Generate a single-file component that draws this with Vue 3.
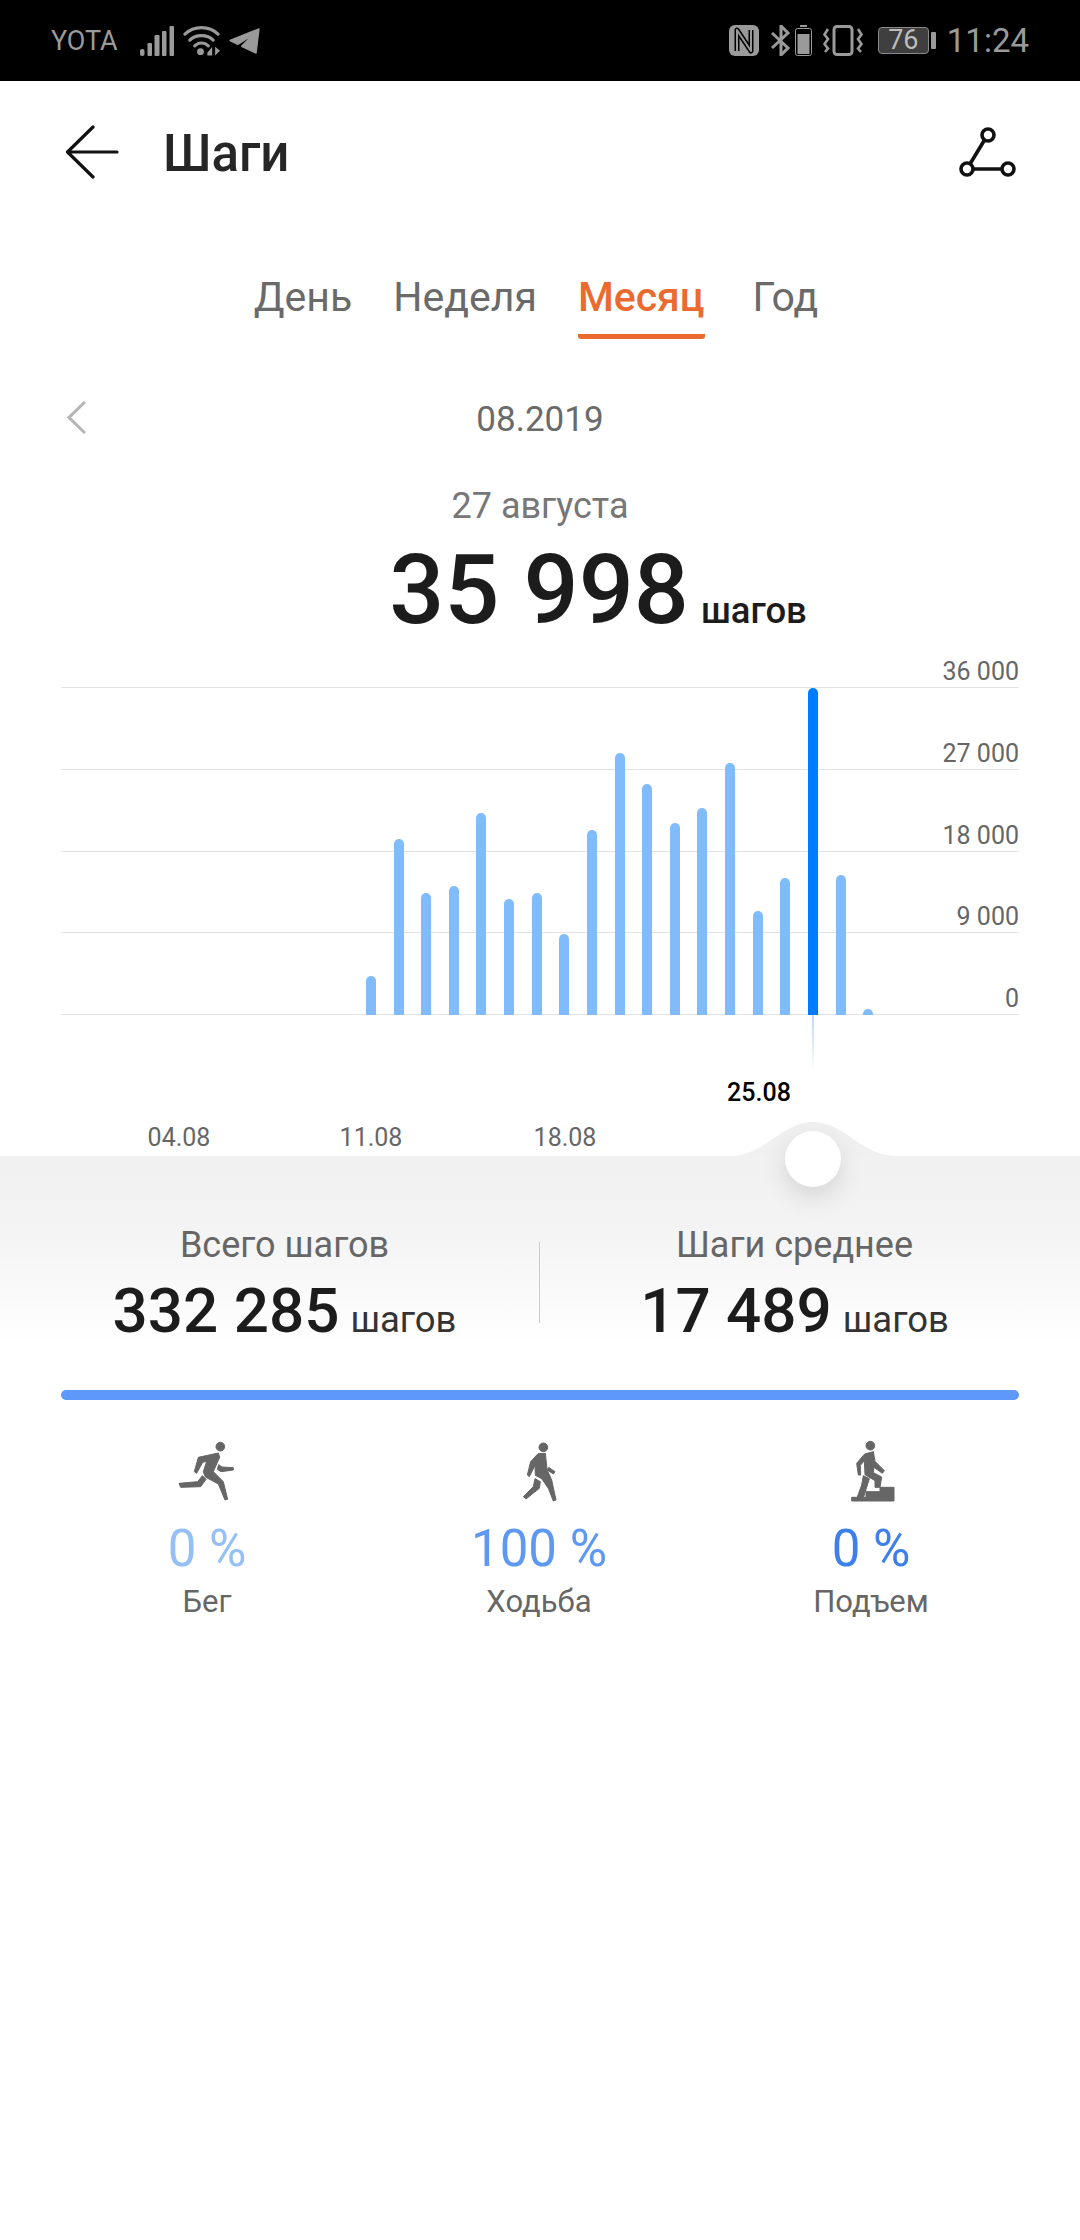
<script setup>
const bars = [
  { x: 371, top: 976 }, { x: 399, top: 839 }, { x: 426, top: 893 }, { x: 454, top: 886 },
  { x: 481, top: 813 }, { x: 509, top: 899 }, { x: 537, top: 893 }, { x: 564, top: 934 },
  { x: 592, top: 830 }, { x: 620, top: 753 }, { x: 647, top: 784 }, { x: 675, top: 823 },
  { x: 702, top: 808 }, { x: 730, top: 763 }, { x: 758, top: 911 }, { x: 785, top: 878 },
  { x: 813, top: 688, active: true }, { x: 841, top: 875 }, { x: 868, top: 1009 }
].map(b => ({ left: b.x - 5 - 61, height: 1015 - b.top, active: b.active }))
const axis = ['36 000', '27 000', '18 000', '9 000', '0']
const activities = [
  { name: 'Бег', pct: '0 %', cls: 'c1', icon: 'run' },
  { name: 'Ходьба', pct: '100 %', cls: 'c2', icon: 'walk' },
  { name: 'Подъем', pct: '0 %', cls: 'c3', icon: 'climb' }
]
</script>

<template>
  <div class="page">
    <div class="status">
      <div class="st-left">
        <span class="carrier">YOTA</span>
        <svg width="34" height="30" viewBox="0 0 34 30" class="sig"><g fill="#9a9a9a"><rect x="0" y="23" width="4.500" height="7" rx="2"/><rect x="7.500" y="17" width="4.500" height="13" rx="1"/><rect x="14.500" y="9" width="5" height="21" rx="1"/><rect x="22" y="5" width="4.500" height="25" rx="1"/><rect x="29.500" y="0" width="4.500" height="30" rx="1"/></g></svg>
        <svg width="37" height="30" viewBox="0 0 38 30" class="wifi"><g fill="none" stroke="#9a9a9a" stroke-width="3.200" stroke-linecap="round"><path d="M2 8C11 -1 27 -1 36 8"/><path d="M7 14C13 8 25 8 31 14"/><path d="M12 20C16 16 22 16 26 20"/></g><circle cx="18" cy="26" r="3.500" fill="#9a9a9a"/><path d="M25 27l5-6v9h-5zM33 21l5 4-5 5z" fill="#9a9a9a"/></svg>
        <svg width="31" height="26" viewBox="0 0 32 27" class="tg"><path d="M1 13L31 1 28 26 13 19 25 7 9 17Z" fill="#9a9a9a" stroke="#9a9a9a" stroke-width="1.500" stroke-linejoin="round"/></svg>
      </div>
      <div class="st-right">
        <svg width="30" height="31" viewBox="0 0 30 31" class="nfc"><rect width="30" height="31" rx="6" fill="#9a9a9a"/><g fill="none" stroke-linejoin="round"><path d="M8 26V5l14 21V5" stroke="#000" stroke-width="5"/><path d="M8 26V5l14 21V5" stroke="#9a9a9a" stroke-width="2"/></g></svg>
        <svg width="21" height="31" viewBox="0 0 21 31" class="bt"><path d="M1 8l16 15-7 7V1l7 7L1 23" fill="none" stroke="#9a9a9a" stroke-width="3"/></svg>
        <svg width="17" height="31" viewBox="0 0 17 31" class="pb"><rect x="5" y="0" width="7" height="2" fill="#9a9a9a"/><rect x="0.500" y="3.500" width="16" height="27" rx="2" fill="none" stroke="#9a9a9a" stroke-width="1"/><rect x="2.500" y="9" width="12" height="20" fill="#9a9a9a"/></svg>
        <svg width="40" height="31" viewBox="0 0 40 31" class="vib"><rect x="11" y="1.500" width="18" height="28" rx="3" fill="none" stroke="#9a9a9a" stroke-width="3"/><path d="M5 4L1.500 9.500 5 14 1.500 19 5 23.500 2 27M35 4l3.500 5.500L35 14l3.500 5L35 23.500 38 27" fill="none" stroke="#9a9a9a" stroke-width="2.600"/></svg>
        <span class="batt"><span class="batt-num">76</span></span>
        <span class="batt-tip"></span>
        <span class="clock">11:24</span>
      </div>
    </div>

    <div class="header">
      <svg width="54" height="54" viewBox="0 0 54 54" class="back"><path d="M28 2L2.500 27 28 52M2.500 27H52" fill="none" stroke="#111" stroke-width="3.200" stroke-linecap="round" stroke-linejoin="round"/></svg>
      <h1 class="title">Шаги</h1>
      <svg width="64" height="54" viewBox="0 0 64 54" class="route"><g fill="none" stroke="#111" stroke-width="3.600"><circle cx="33" cy="10" r="6"/><circle cx="12" cy="44" r="6"/><circle cx="53" cy="44" r="6"/><path d="M29.500 15L15 39M18 44H47"/></g></svg>
    </div>

    <div class="tabs">
      <span class="tab">День</span>
      <span class="tab">Неделя</span>
      <span class="tab active">Месяц</span>
      <span class="tab last">Год</span>
    </div>

    <div class="period">
      <svg width="19" height="33" viewBox="0 0 19 33" class="prev"><path d="M18 1L2 16.500 18 32" fill="none" stroke="#b5b5b5" stroke-width="3"/></svg>
      <span>08.2019</span>
    </div>

    <div class="day">27 августа</div>
    <div class="total"><span class="big">35 998</span><span class="unit">шагов</span></div>

    <div class="chart">
      <div class="grid">
        <div class="line" v-for="a in axis" :key="a"><span class="tick">{{ a }}</span></div>
      </div>
      <div class="bars">
        <div v-for="(b, i) in bars" :key="i" class="bar" :class="{ on: b.active }" :style="{ left: b.left + 'px', height: b.height + 'px' }"></div>
      </div>
      <div class="pointer"></div>
    </div>

    <div class="xaxis">
      <span class="xl" style="left: 147px">04.08</span>
      <span class="xl" style="left: 339px">11.08</span>
      <span class="xl" style="left: 533px">18.08</span>
      <span class="xl sel" style="left: 727px">25.08</span>
      <svg class="hump" width="166" height="34" viewBox="0 0 166 34"><path d="M0 34C34 34 52 0 83 0S132 34 166 34Z" fill="#f0f0f0"/></svg>
    </div>

    <div class="summary">
      <div class="thumb"></div>
      <div class="stat">
        <div class="stat-label">Всего шагов</div>
        <div class="stat-val"><span class="num">332 285</span><span class="u">шагов</span></div>
      </div>
      <div class="divider"></div>
      <div class="stat">
        <div class="stat-label">Шаги среднее</div>
        <div class="stat-val"><span class="num">17 489</span><span class="u">шагов</span></div>
      </div>
    </div>

    <div class="progress"></div>

    <div class="activities">
      <div class="act" v-for="a in activities" :key="a.name">
        <svg v-if="a.icon === 'run'" width="100" height="80" viewBox="-9 0 300 240" class="ic">
          <circle cx="181" cy="50" r="13"/>
          <path d="M175 69L115 82 103 125 110 130 128 97 140 94 130 125 136 141 175 162 195 210 203 208 190 155 160 125 170 102 179 82Z"/>
          <path d="M57 160L113 155 127 137 138 148 122 170 62 172Z"/>
          <path d="M176 104L186 111 220 113 220 120 183 125 172 118Z"/>
        </svg>
        <svg v-else-if="a.icon === 'walk'" width="100" height="80" viewBox="-33 0 300 240" class="ic">
          <circle cx="130" cy="52" r="13"/>
          <path d="M114 71L136 70 141 118 155 150 168 210 160 213 145 175 125 146 106 136 105 106 88 140 82 135 92 95Z"/>
          <path d="M146 112L165 125 160 132 142 120Z"/>
          <path d="M105 146L121 155 118 175 78 207 70 200 100 170Z"/>
        </svg>
        <svg v-else width="100" height="80" viewBox="-27 0 300 240" class="ic">
          <circle cx="121" cy="47" r="13"/>
          <path d="M104 72L130 65 135 94 163 122 157 130 132 112 130 128 155 141 150 172 135 172 135 152 105 134 103 92 91 106 92 135 85 135 80 100Z"/>
          <path d="M100 137L118 146 101 201 82 201 95 165Z"/>
          <path d="M65 202H108V185H150V172H192V213H65Z"/>
        </svg>
        <div class="pct" :class="a.cls">{{ a.pct }}</div>
        <div class="act-name">{{ a.name }}</div>
      </div>
    </div>
  </div>
</template>

<style>
html, body { margin: 0; background: #fff; }
</style>

<style scoped>
.page { width: 1080px; height: 2240px; background: #fff; font-family: Roboto, "Noto Sans", sans-serif; color: #666; overflow: hidden; }
.status { height: 81px; background: #000; display: flex; justify-content: space-between; align-items: center; padding: 0 51px; color: #9a9a9a; }
.st-left, .st-right { display: flex; align-items: center; }
.carrier { font-size: 27px; margin-right: 22px; }
.wifi { margin-left: 9px; }
.tg { margin-left: 9px; }
.bt { margin-left: 12px; }
.pb { margin-left: 3px; }
.vib { margin-left: 11px; }
.batt { width: 51px; height: 27px; box-sizing: border-box; border: 1.500px solid #8a8a8a; border-radius: 4px; background: #3f3f3f; display: flex; align-items: center; justify-content: center; margin-left: 15px; }
.batt-num { font-size: 27px; color: #bdbdbd; line-height: 25px; }
.batt-tip { width: 5px; height: 17px; background: #9a9a9a; margin-left: 2px; border-radius: 1px; }
.clock { font-size: 33px; margin-left: 11px; }

.header { height: 146px; display: flex; align-items: center; padding: 0 61px 4px 65px; box-sizing: border-box; }
.title { margin: 3px 0 0 44px; flex: 1; font-size: 51px; font-weight: 500; color: #262626; }

.tabs { display: flex; justify-content: center; height: 163px; gap: 41px; padding: 36px 8px 0 0; box-sizing: border-box; }
.tab { font-size: 41px; color: #6a6a6a; line-height: 68px; height: 76px; box-sizing: border-box; }
.tab.active { color: #eb6a30; font-weight: 500; border-bottom: 5px solid #eb6a30; border-radius: 3px; }
.tab.last { margin-left: 7px; }

.period { height: 96px; position: relative; display: flex; justify-content: center; font-size: 35px; line-height: 60px; color: #6a6a6a; }
.prev { position: absolute; left: 67px; top: 11px; }

.day { text-align: center; font-size: 36px; color: #777; line-height: 40px; height: 61px; }
.total { display: flex; justify-content: center; align-items: baseline; height: 86px; line-height: 86px; color: #1c1c1c; padding-left: 116px; }
.big { font-size: 97px; font-weight: 500; }
.unit { font-size: 36.500px; font-weight: 500; margin-left: 12px; }

.chart { position: relative; margin: 54px 61px 0; height: 328px; }
.grid { display: flex; flex-direction: column; justify-content: space-between; height: 328px; }
.line { height: 1px; background: #e3e3e3; position: relative; }
.tick { position: absolute; right: 0; bottom: 0; font-size: 25px; color: #666; line-height: 32px; }
.bars { position: absolute; inset: 0; }
.bar { position: absolute; bottom: 0; width: 10px; background: #80bcfc; border-radius: 5px 5px 0 0; }
.bar.on { background: #007dff; }
.pointer { position: absolute; left: 751px; top: 328px; width: 2px; height: 56px; background: linear-gradient(#b9d9fb, #ffffff); }

.xaxis { position: relative; height: 141px; }
.xl { position: absolute; top: 107px; transform: translateX(-50%); margin-left: 32px; font-size: 25px; color: #666; line-height: 32px; }
.xl.sel { top: 62px; color: #000; font-weight: 500; }
.hump { position: absolute; left: 730px; bottom: 0; }

.summary { position: relative; height: 234px; box-sizing: border-box; display: flex; padding: 0 31px 0 30px; background: linear-gradient(#f1f1f1 0, #f3f3f3 70px, #fff 190px); }
.thumb { position: absolute; left: 785px; top: -25px; width: 56px; height: 56px; border-radius: 50%; background: #fff; box-shadow: 0 10px 26px rgba(0,0,0,.12); }
.stat { flex: 1; text-align: center; padding-top: 69px; }
.stat-label { font-size: 36px; color: #666; line-height: 40px; }
.stat-val { margin-top: 11px; display: flex; justify-content: center; align-items: baseline; color: #1c1c1c; }
.num { font-size: 62px; font-weight: 500; line-height: 70px; }
.u { font-size: 36.500px; margin-left: 11px; color: #333; }
.divider { width: 1px; height: 81px; background: #ccc; margin-top: 86px; }

.progress { height: 10px; margin: 0 61px; background: #5e98f8; border-radius: 5px; }

.activities { display: flex; padding: 30px 0 0 41px; }
.act { width: 332px; display: flex; flex-direction: column; align-items: center; }
.ic { fill: #666; stroke: #666; stroke-width: 3; stroke-linejoin: round; }
.pct { font-size: 51px; line-height: 60px; margin-top: 9px; }
.c1 { color: #94bff7; }
.c2 { color: #5f98f1; }
.c3 { color: #3d80ec; }
.act-name { font-size: 31px; color: #666; line-height: 40px; margin-top: 3px; }
</style>
